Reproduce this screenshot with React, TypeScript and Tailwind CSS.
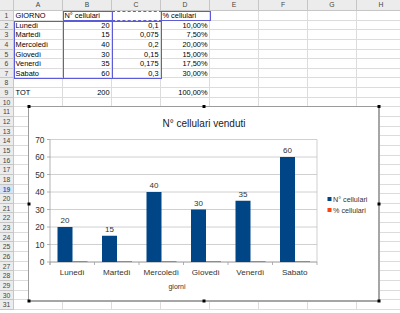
import React from "react";

const COLS = ["A", "B", "C", "D", "E", "F", "G", "H"];
const ROW_H = 9.65;
const HEAD_H = 11;

type Cell = { t: string; right?: boolean };
const data: Record<number, Cell[]> = {
  1: [{ t: "GIORNO" }, { t: "N° cellulari" }, { t: "" }, { t: "% cellulari" }],
  2: [{ t: "Lunedì" }, { t: "20", right: true }, { t: "0,1", right: true }, { t: "10,00%", right: true }],
  3: [{ t: "Martedì" }, { t: "15", right: true }, { t: "0,075", right: true }, { t: "7,50%", right: true }],
  4: [{ t: "Mercoledì" }, { t: "40", right: true }, { t: "0,2", right: true }, { t: "20,00%", right: true }],
  5: [{ t: "Giovedì" }, { t: "30", right: true }, { t: "0,15", right: true }, { t: "15,00%", right: true }],
  6: [{ t: "Venerdì" }, { t: "35", right: true }, { t: "0,175", right: true }, { t: "17,50%", right: true }],
  7: [{ t: "Sabato" }, { t: "60", right: true }, { t: "0,3", right: true }, { t: "30,00%", right: true }],
  9: [{ t: "TOT" }, { t: "200", right: true }, { t: "" }, { t: "100,00%", right: true }],
};

const days = [
  { d: "Lunedì", n: 20, p: 0.1 },
  { d: "Martedì", n: 15, p: 0.075 },
  { d: "Mercoledì", n: 40, p: 0.2 },
  { d: "Giovedì", n: 30, p: 0.15 },
  { d: "Venerdì", n: 35, p: 0.175 },
  { d: "Sabato", n: 60, p: 0.3 },
];

function Chart() {
  const x0 = 50;
  const x1 = 317;
  const y0 = 262;
  const unit = 1.75;
  const cw = (x1 - x0) / 6;
  const grid = [0, 1, 2, 3, 4, 5, 6, 7];
  const handles: [number, number][] = [
    [29, 106.5],
    [204, 106.5],
    [379, 106.5],
    [29, 204],
    [379, 204],
    [29, 301],
    [204, 301],
    [379, 301],
  ];
  return (
    <svg
      width={356}
      height={200}
      viewBox="26 104 356 200"
      className="block"
      style={{ fontFamily: "'Liberation Sans', Arial, sans-serif" }}
    >
      <rect x={28.5} y={106.5} width={350} height={194.5} fill="#fff" stroke="#9c9c9c" strokeWidth={1} />
      <line x1={379} x2={379} y1={106} y2={302} stroke="#a6a6a6" strokeWidth={2} />
      <line x1={28} x2={380} y1={301} y2={301} stroke="#a6a6a6" strokeWidth={2} />
      <text x={204} y={126.5} fontSize={10} textAnchor="middle" fill="#1a1a1a">
        N° cellulari venduti
      </text>
      {grid.map((k) => (
        <g key={k}>
          <line x1={x0} x2={x1} y1={y0 - k * 17.5} y2={y0 - k * 17.5} stroke="#c4c4c4" strokeWidth={0.8} />
          <line x1={x0 - 3} x2={x0} y1={y0 - k * 17.5} y2={y0 - k * 17.5} stroke="#a0a0a0" strokeWidth={0.8} />
          <text x={44.5} y={y0 - k * 17.5 + 3} fontSize={8.4} textAnchor="end" fill="#333">
            {k * 10}
          </text>
        </g>
      ))}
      <line x1={x1} x2={x1} y1={y0 - 7 * 17.5} y2={y0} stroke="#c4c4c4" strokeWidth={0.8} />
      <line x1={x0} x2={x0} y1={y0 - 7 * 17.5} y2={y0 + 3} stroke="#a0a0a0" strokeWidth={0.8} />
      <line x1={x0} x2={x1} y1={y0} y2={y0} stroke="#a0a0a0" strokeWidth={0.8} />
      {[0, 1, 2, 3, 4, 5, 6].map((i) => (
        <line key={i} x1={x0 + i * cw} x2={x0 + i * cw} y1={y0} y2={y0 + 3} stroke="#a0a0a0" strokeWidth={0.8} />
      ))}
      {days.map((d, i) => {
        const s = x0 + i * cw;
        const bh = d.n * unit;
        const rh = Math.max(d.p * unit, 0.9);
        return (
          <g key={d.d}>
            <rect x={s + 7.5} y={y0 - bh} width={15} height={bh} fill="#004586" />
            <rect x={s + 22.5} y={y0 - rh} width={15} height={rh} fill="#ff420e" opacity={0.8} />
            <text x={s + 15} y={y0 - bh - 4} fontSize={8} textAnchor="middle" fill="#333">
              {d.n}
            </text>
            <text x={s + cw / 2} y={274.5} fontSize={8.1} textAnchor="middle" fill="#333">
              {d.d}
            </text>
          </g>
        );
      })}
      <text x={177} y={288.5} fontSize={7} textAnchor="middle" fill="#333">
        giorni
      </text>
      <rect x={327.5} y={197} width={4} height={4} fill="#004586" />
      <text x={333} y={201.5} fontSize={7.2} fill="#333">
        N° cellulari
      </text>
      <rect x={327.5} y={208} width={4} height={4} fill="#ff420e" />
      <text x={333} y={212.5} fontSize={7.2} fill="#333">
        % cellulari
      </text>
      {handles.map(([hx, hy], i) => (
        <rect key={i} x={hx - 1.5} y={hy - 1.5} width={3} height={3} fill="#000" />
      ))}
    </svg>
  );
}

function RangeBox({ dashed, className }: { dashed?: boolean; className: string }) {
  return (
    <div
      className={
        (dashed ? "border-dashed " : "") +
        "absolute border border-[#5c5cd6] pointer-events-none " +
        className
      }
    />
  );
}

export default function App() {
  const rows = Array.from({ length: 31 }, (_, i) => i + 1);
  return (
    <div className="relative w-[400px] h-[313px] overflow-hidden bg-white font-['Liberation_Sans',Arial,sans-serif] text-black">
      {/* column header */}
      <div className="flex h-[11px]">
        <div className="w-[14px] shrink-0 bg-[#ececec] border-r border-b border-[#c6c6c6]" />
        {COLS.map((c) => (
          <div
            key={c}
            className="w-[49px] shrink-0 bg-[#ececec] border-r border-b border-[#c6c6c6] text-[6.8px] leading-[10px] text-center text-[#444]"
          >
            {c}
          </div>
        ))}
      </div>
      {rows.map((r) => {
        const cells = data[r] || [];
        const sel = r === 19;
        return (
          <div key={r} className="flex h-[9.65px]">
            <div
              className={
                sel
                  ? "w-[14px] shrink-0 bg-[#d9e4f2] border-r border-b border-[#c6c6c6] text-[6.8px] leading-[9px] text-center text-[#1f6fd1] font-bold"
                  : "w-[14px] shrink-0 bg-[#ececec] border-r border-b border-[#c6c6c6] text-[6.8px] leading-[9px] text-center text-[#444]"
              }
            >
              {r}
            </div>
            {COLS.map((c, ci) => {
              const cell = cells[ci];
              return (
                <div
                  key={c}
                  className={
                    cell && cell.right
                      ? "w-[49px] shrink-0 border-r border-b border-[#dcdcdc] text-[7.4px] leading-[9px] px-[1.5px] text-right whitespace-nowrap overflow-hidden"
                      : "w-[49px] shrink-0 border-r border-b border-[#dcdcdc] text-[7.4px] leading-[9px] px-[1.5px] text-left whitespace-nowrap overflow-hidden"
                  }
                >
                  {cell ? cell.t : ""}
                </div>
              );
            })}
          </div>
        );
      })}

      {/* chart data range highlights (overlay) */}
      <RangeBox className="left-[14px] top-[20.65px] w-[49.5px] h-[57.9px]" />
      <RangeBox className="left-[63px] top-[11px] w-[49.5px] h-[9.65px]" />
      <RangeBox className="left-[63px] top-[20.65px] w-[49.5px] h-[57.9px]" />
      <RangeBox dashed className="left-[112px] top-[11px] w-[49.5px] h-[9.65px]" />
      <RangeBox className="left-[112px] top-[20.65px] w-[49.5px] h-[57.9px]" />
      <RangeBox className="left-[161px] top-[11px] w-[49.5px] h-[9.65px]" />

      {/* embedded chart object floating over the sheet */}
      <div className="absolute left-[26px] top-[104px]">
        <Chart />
      </div>
    </div>
  );
}
